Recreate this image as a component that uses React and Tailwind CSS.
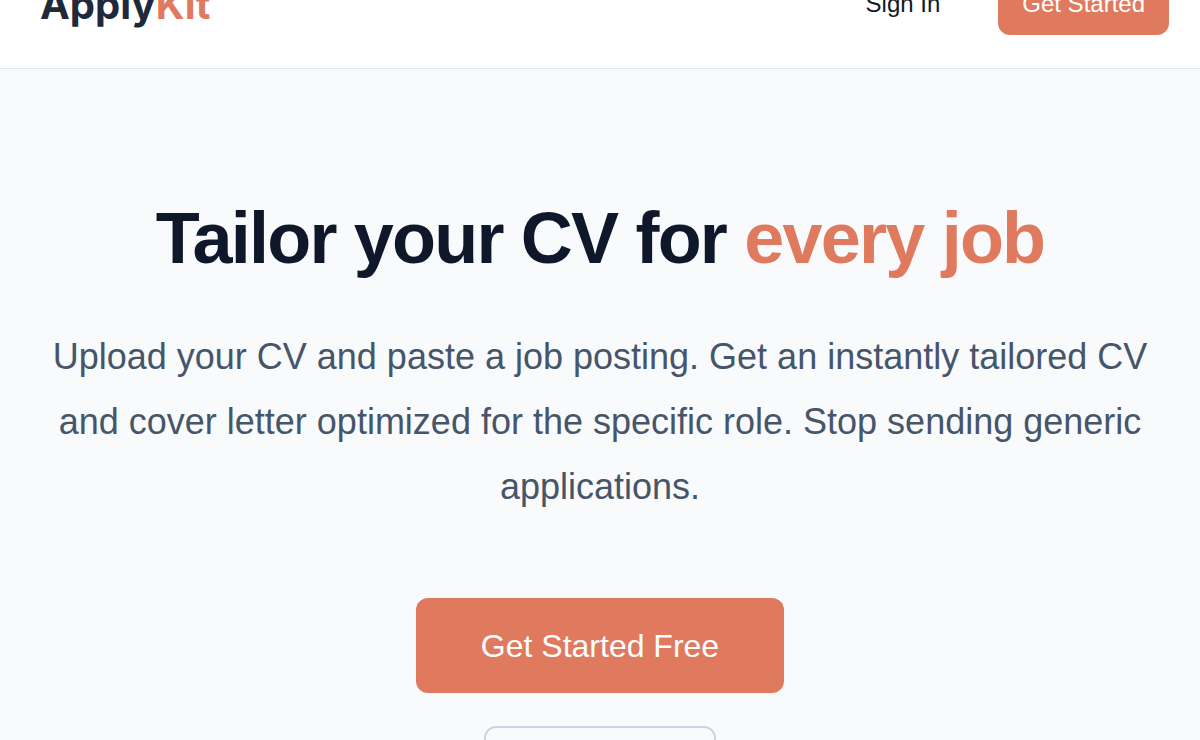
import React from 'react';

const sans = { fontFamily: '"Liberation Sans", Arial, sans-serif' };

export default function App() {
  return (
    <div className="min-h-screen bg-[#f8fafc]" style={sans}>
      {/* Header (page is scrolled, top is cut) */}
      <header className="h-[69px] bg-white border-b border-[#e2e8f0] overflow-hidden">
        <div className="-mt-[27px] flex items-center justify-between pl-10 pr-[31px]">
          <a className="text-[40px] leading-[48px] font-bold text-[#1e293b] translate-y-[1px]" style={{ fontFamily: 'Inter, "Liberation Sans", sans-serif' }}>
            Apply<span className="text-[#e07a5f]">Kit</span>
          </a>
          <div className="flex items-center">
            <a className="text-[24px] text-[#111827]">Sign In</a>
            <button className="ml-[58px] px-6 py-[15px] text-[24px] leading-8 text-white bg-[#e07a5f] rounded-xl">
              Get Started
            </button>
          </div>
        </div>
      </header>

      {/* Hero */}
      <main className="flex flex-col items-center px-12 pt-[133px] text-center">
        <h1 className="text-[72px] leading-none font-bold tracking-tight text-[#0f172a]">
          Tailor your CV for <span className="text-[#e07a5f]">every job</span>
        </h1>
        <p className="mt-[51px] max-w-[1100px] text-[36px] leading-[1.8] text-[#475569]">
          Upload your CV and paste a job posting. Get an instantly tailored CV and cover letter optimized for the specific role. Stop sending generic applications.
        </p>
        <button className="mt-[79px] w-[368px] h-[95px] text-[32px] text-white bg-[#e07a5f] rounded-xl">
          Get Started Free
        </button>
        <button className="mt-[33px] w-[232px] h-[95px] text-[32px] text-[#334155] border-2 border-[#cbd5e1] rounded-xl">
          Sign In
        </button>
      </main>
    </div>
  );
}
